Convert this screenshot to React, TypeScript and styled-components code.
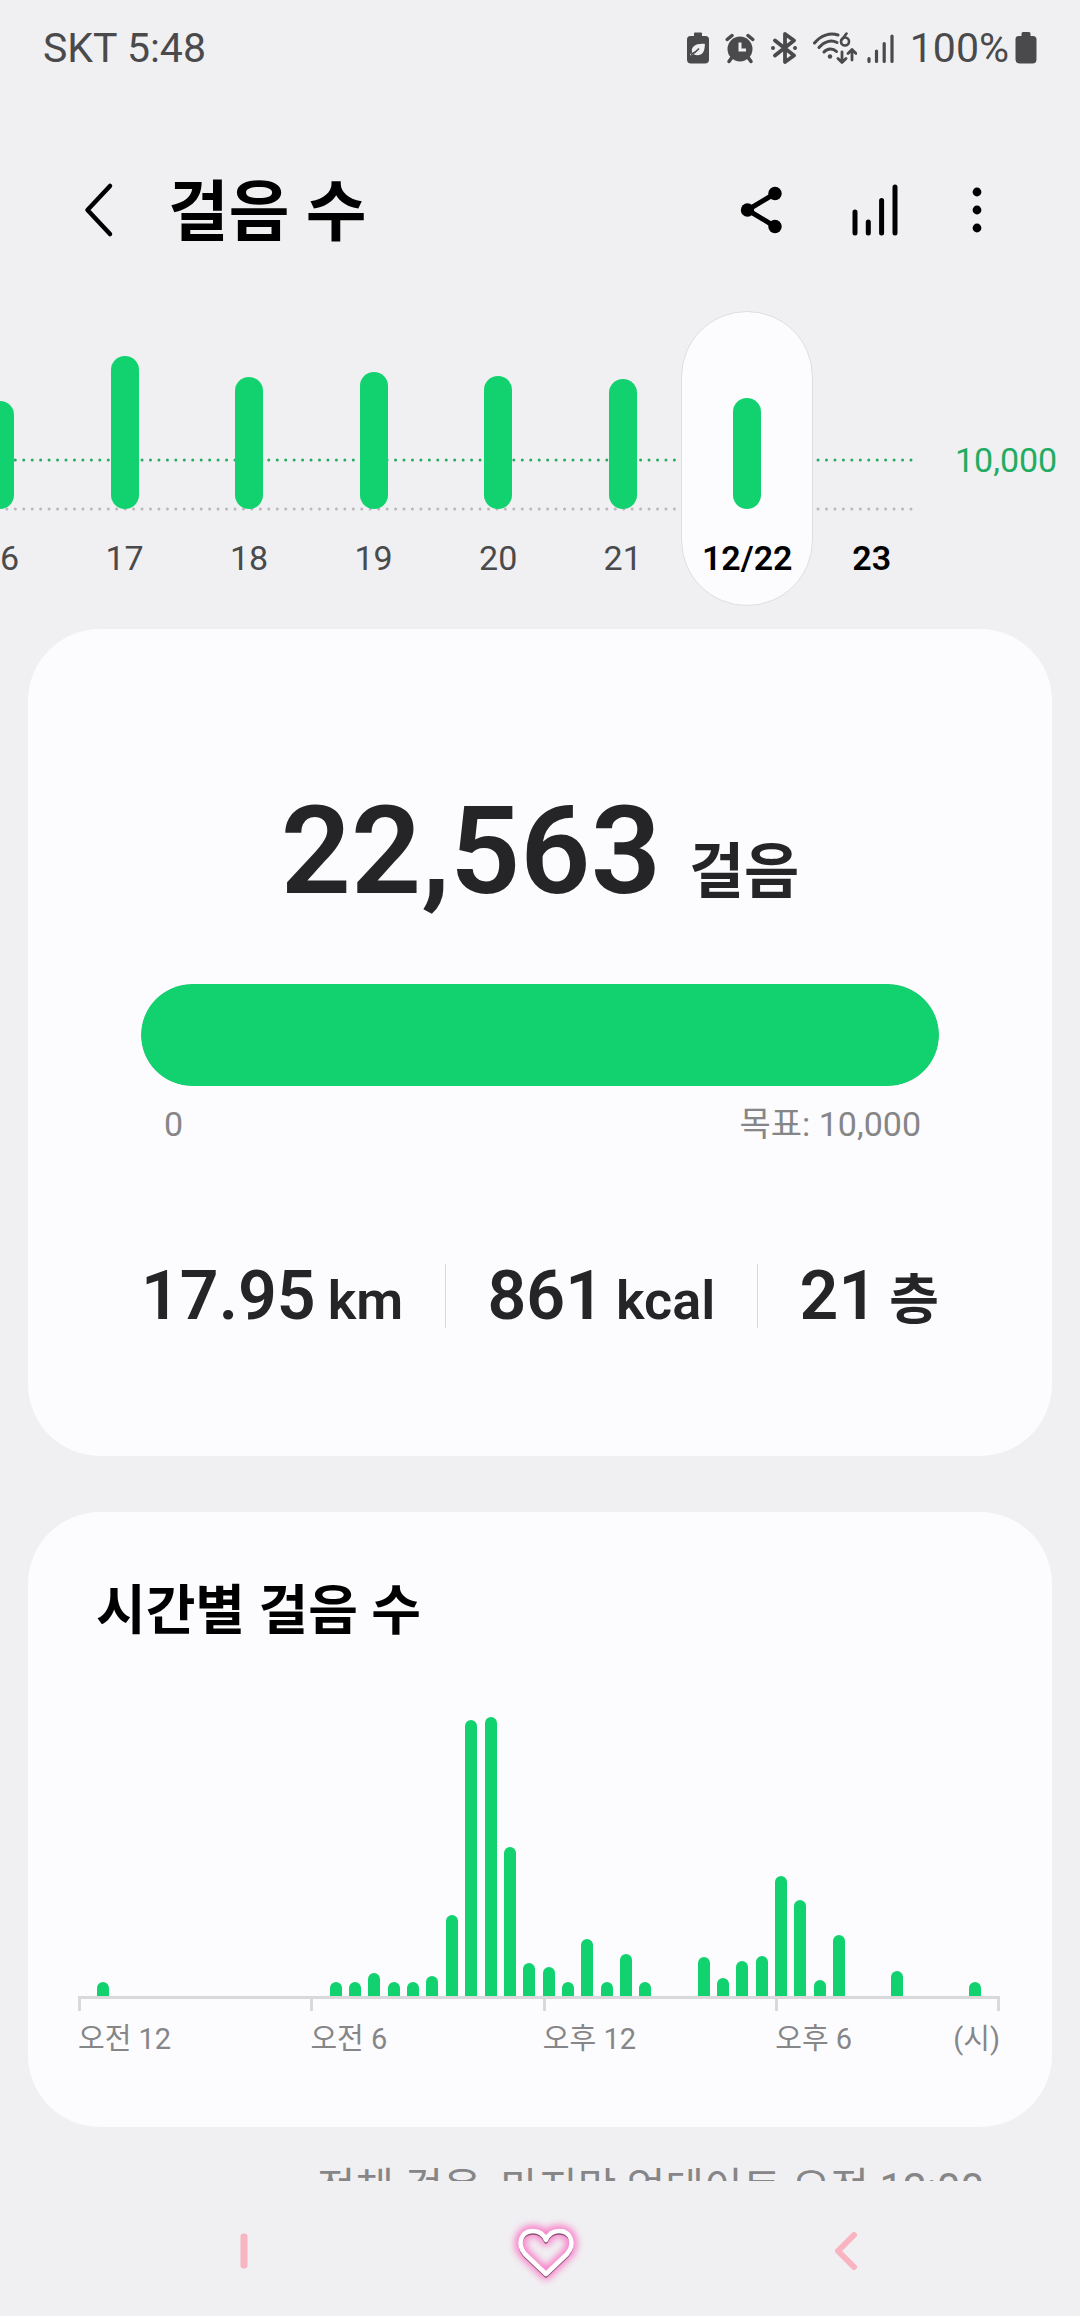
import React from "react";
import styled, { createGlobalStyle } from "styled-components";

const color = {
  page: "#f0f0f2",
  card: "#fcfcfe",
  green: "#12d16f",
  greenText: "#22ac62",
  ink: "#252527",
  muted: "#868688",
  status: "#4a4a4c",
  line: "#d9d9db",
  nav: "#f8b4c0",
};

const GlobalStyle = createGlobalStyle`
  * { box-sizing: border-box; }
  body {
    margin: 0;
    background: ${color.page};
    color: ${color.ink};
    font-family: Roboto, "Noto Sans CJK KR", sans-serif;
  }
  button {
    margin: 0;
    padding: 0;
    border: 0;
    background: none;
    color: inherit;
    font: inherit;
    cursor: pointer;
  }
  svg { display: block; }
  h1, h2, p, ul { margin: 0; padding: 0; }
`;

const Screen = styled.div`
  display: flex;
  flex-direction: column;
  height: 100vh;
`;

/* ---------- status bar ---------- */

const StatusBar = styled.header`
  display: flex;
  flex: none;
  align-items: center;
  justify-content: space-between;
  height: 96px;
  padding: 0 43px;
  color: ${color.status};
  font-size: 41px;
  line-height: 48px;
`;

const StatusGroup = styled.div<{ $gap: number }>`
  display: flex;
  align-items: center;
  gap: ${(p) => p.$gap}px;
`;

const EcoBattery = () => (
  <svg width="22" height="32" viewBox="0 0 22 32" fill={color.status}>
    <path d="M7 1.5Q7 .5 8 .5h6q1 0 1 1V4h3.500Q22 4 22 7.500v20q0 4-4 4H4q-4 0-4-4v-20Q0 4 3.500 4H7z" />
    <path
      d="M18 12c-4-.4-9 0-11.500 2.500-2 2-2 4.500-1.200 6L3 22.200l.8 1.300 2.700-1.500c3 2 7.500 1.500 9.500-1.500 1.800-2.600 1.600-6 2-8.500z"
      fill={color.page}
    />
    <path d="M4 22.500c3.500-1.500 6-3.500 8-6" stroke={color.status} strokeWidth="1.500" fill="none" />
  </svg>
);

const AlarmIcon = () => (
  <svg width="30" height="32" viewBox="0 0 30 32" fill="none" stroke={color.status} strokeLinecap="round">
    <circle cx="15" cy="17" r="12.500" fill={color.status} stroke="none" />
    <path d="M2.200 7.500 7 3.500M27.800 7.500 23 3.500" strokeWidth="3.500" />
    <path d="m6.500 26-2.500 3.500M23.500 26l2.500 3.500" strokeWidth="3.500" />
    <path d="M15 10.500V18h6" stroke={color.page} strokeWidth="3" strokeLinecap="butt" />
  </svg>
);

const BluetoothIcon = () => (
  <svg width="26" height="32" viewBox="0 0 26 32" fill="none" stroke={color.status} strokeLinecap="round" strokeLinejoin="round">
    <path d="m4 8.500 19 15-9 6.500V2l9 6.500-19 15" strokeWidth="3.800" />
    <circle cx="2" cy="16" r="2" fill={color.status} stroke="none" />
    <circle cx="24" cy="16" r="2" fill={color.status} stroke="none" />
  </svg>
);

const WifiIcon = () => (
  <svg width="44" height="32" viewBox="0 0 44 32" fill="none" stroke={color.status} strokeLinecap="round" strokeLinejoin="round">
    <path d="M1.500 11C8 3 17 .5 25 3" strokeWidth="3" />
    <path d="M6 15.500C11 9.500 18 7.500 24 10.500" strokeWidth="3" />
    <path d="M11 20c3.500-4 9-4 12.500-.5" strokeWidth="3" />
    <circle cx="17" cy="24.500" r="2.200" fill={color.status} stroke="none" />
    <circle cx="32" cy="9.500" r="4" strokeWidth="2.600" />
    <path d="m33.500 1.500-4.500 6" strokeWidth="2.600" />
    <path d="M29 20v10m-4-3.500 4 4 4-4M39 28V18m-4 3.500 4-4 4 4" strokeWidth="2.800" />
  </svg>
);

const SignalIcon = () => (
  <svg width="27" height="32" viewBox="0 0 27 32" stroke={color.status} strokeWidth="3.200" strokeLinecap="round">
    <path d="M2 26.500v3M9.500 19v10.500M17.200 11.500v18M25 4v25.500" />
  </svg>
);

const FullBattery = () => (
  <svg width="22" height="32" viewBox="0 0 22 32" fill={color.status}>
    <path d="M6.500 1.500Q6.500 0 8 0h6q1.500 0 1.500 1.500V4H18q3.500 0 3.500 3.500v20q0 4-4 4h-13q-4 0-4-4v-20Q.5 4 4 4h2.500z" />
  </svg>
);

/* ---------- title bar ---------- */

const TitleBar = styled.div`
  display: flex;
  flex: none;
  align-items: center;
  height: 215px;
  padding: 13px 91px 0 75px;
  color: #000;
`;

const Title = styled.h1`
  flex: 1;
  margin-left: 45px;
  padding-top: 6px;
  font-size: 66px;
  line-height: 80px;
  font-weight: 700;
`;

const IconButton = styled.button<{ $narrow?: boolean }>`
  display: grid;
  place-items: center;
  width: ${(p) => (p.$narrow ? 24 : 48)}px;
  height: 64px;
`;

const Actions = styled.div`
  display: flex;
  gap: 66px;
`;

/* ---------- daily strip ---------- */

const Daily = styled.section`
  display: grid;
  grid-template-columns: minmax(0, 1fr) 146px;
  flex: none;
  height: 295px;
  overflow: hidden;
`;

const Strip = styled.div`
  position: relative;
  display: flex;
  justify-content: flex-end;
`;

const Guides = styled.svg`
  position: absolute;
  inset: 0;
  width: 100%;
  height: 100%;
`;

const Day = styled.button<{ $tone: "past" | "selected" | "future" }>`
  position: relative;
  display: flex;
  flex: 0 0 calc(100% / 15 * 2);
  flex-direction: column;
  align-items: center;
  justify-content: flex-end;
  height: 295px;
  padding-bottom: 28px;
  color: ${(p) => (p.$tone === "past" ? color.status : "#000")};
  font-size: 34px;
  line-height: 40px;
  font-weight: ${(p) => (p.$tone === "past" ? 400 : 600)};
  white-space: nowrap;

  &::before {
    content: "";
    display: ${(p) => (p.$tone === "selected" ? "block" : "none")};
    position: absolute;
    inset: 0 -4px;
    border: 1px solid #dedee0;
    border-radius: 66px;
    background: ${color.card};
  }
`;

const DayBar = styled.span`
  position: relative;
  width: 28px;
  margin-bottom: 29px;
  border-radius: 14px;
  background: ${color.green};
`;

const DayLabel = styled.span`
  position: relative;
`;

const GoalMark = styled.div`
  padding: 129px 0 0 21px;
  color: ${color.greenText};
  font-size: 34px;
  line-height: 40px;
`;

/* ---------- cards ---------- */

const Content = styled.main`
  display: flex;
  flex: 1;
  flex-direction: column;
  min-height: 0;
  overflow: hidden;
  padding: 23px 28px 0;
`;

const Card = styled.section`
  flex: none;
  border-radius: 72px;
  background: ${color.card};
`;

const SummaryCard = styled(Card)`
  padding: 150px 113px 128px;
`;

const Total = styled.p`
  display: flex;
  align-items: baseline;
  justify-content: center;
  gap: 28px;
  font-size: 123px;
  line-height: 144px;
  font-weight: 600;
`;

const TotalUnit = styled.span`
  font-size: 60px;
`;

const Progress = styled.div`
  height: 102px;
  margin-top: 39px;
  overflow: hidden;
  border-radius: 51px;
  background: ${color.line};
`;

const ProgressFill = styled.div`
  height: 100%;
  border-radius: 51px;
  background: ${color.green};
`;

const Range = styled.div`
  display: flex;
  justify-content: space-between;
  margin-top: 16px;
  padding: 0 18px 0 23px;
  color: ${color.muted};
  font-size: 34px;
  line-height: 44px;
`;

const Stats = styled.ul`
  display: flex;
  align-items: center;
  justify-content: space-between;
  height: 64px;
  margin-top: 118px;
  list-style: none;
`;

const Stat = styled.li`
  display: flex;
  align-items: baseline;
  gap: 12px;
  padding-top: 4px;
  font-size: 68px;
  line-height: 80px;
  font-weight: 600;
  white-space: nowrap;
`;

const StatUnit = styled.span`
  font-size: 54px;
`;

const Divider = styled.li`
  width: 1px;
  height: 64px;
  background: ${color.line};
`;

const HourlyCard = styled(Card)`
  margin-top: 56px;
  padding: 64px 52px 68px 50px;
`;

const CardTitle = styled.h2`
  padding-left: 18px;
  color: #000;
  font-size: 54px;
  line-height: 72px;
  font-weight: 700;
`;

const Bars = styled.div`
  display: flex;
  align-items: flex-end;
  justify-content: space-between;
  height: 280px;
  margin-top: 68px;
`;

const Bar = styled.span`
  width: 12px;
  border-radius: 6px 6px 0 0;
  background: ${color.green};
`;

const Axis = styled.div`
  display: grid;
  grid-template-columns: 60fr 60fr 60fr 58fr;
  border-top: 3px solid ${color.line};
`;

const AxisCell = styled.div`
  color: ${color.muted};
  font-size: 29px;
  line-height: 40px;

  &::before {
    content: "";
    display: block;
    height: 12px;
    margin-bottom: 8px;
    border-left: 3px solid ${color.line};
  }

  &:last-child::before {
    border-right: 3px solid ${color.line};
  }
`;

const AxisLabels = styled.div`
  display: flex;
  justify-content: space-between;
`;

const Updated = styled.p`
  flex: none;
  margin-top: 32px;
  padding-right: 68px;
  color: ${color.muted};
  font-size: 42px;
  line-height: 60px;
  text-align: right;
  white-space: nowrap;
`;

/* ---------- navigation bar ---------- */

const NavBar = styled.nav`
  display: grid;
  grid-template-columns: repeat(3, 1fr);
  flex: none;
  align-items: center;
  justify-items: center;
  height: 135px;
  padding: 4px 84px 0 94px;
`;

const NavButton = styled.button`
  display: grid;
  place-items: center;
  width: 96px;
  height: 96px;
`;

/* ---------- data ---------- */

const days: { label: string; bar: number; tone: "past" | "selected" | "future" }[] = [
  { label: "16", bar: 108, tone: "past" },
  { label: "17", bar: 153, tone: "past" },
  { label: "18", bar: 132, tone: "past" },
  { label: "19", bar: 137, tone: "past" },
  { label: "20", bar: 133, tone: "past" },
  { label: "21", bar: 130, tone: "past" },
  { label: "12/22", bar: 111, tone: "selected" },
  { label: "23", bar: 0, tone: "future" },
];

/* One value for each half hour of the day. */
const halfHours = [
  0, 14, 0, 0, 0, 0, 0, 0, 0, 0, 0, 0,
  0, 14, 14, 23, 14, 14, 20, 81, 276, 279, 149, 33,
  29, 14, 57, 14, 42, 14, 0, 0, 39, 18, 35, 40,
  120, 96, 16, 61, 0, 0, 25, 0, 0, 0, 14, 0,
];

const stats = [
  { value: "17.95", unit: "km" },
  { value: "861", unit: "kcal" },
  { value: "21", unit: "층" },
];

const heart =
  "M43 65 22 45C14 36 17 22 30 22c7 0 11 4 13 9 2-5 6-9 13-9 13 0 16 14 8 23z";

export default function App() {
  return (
    <>
      <GlobalStyle />
      <Screen>
        <StatusBar>
          <span>SKT 5:48</span>
          <StatusGroup $gap={16}>
            <EcoBattery />
            <AlarmIcon />
            <BluetoothIcon />
            <StatusGroup $gap={10}>
              <WifiIcon />
              <SignalIcon />
            </StatusGroup>
            <StatusGroup $gap={6}>
              <span>100%</span>
              <FullBattery />
            </StatusGroup>
          </StatusGroup>
        </StatusBar>

        <TitleBar>
          <IconButton aria-label="뒤로">
            <svg width="30" height="56" viewBox="0 0 30 56" fill="none" stroke="#000" strokeWidth="4.500" strokeLinecap="round" strokeLinejoin="round">
              <path d="M26 4 3.500 28 26 52" />
            </svg>
          </IconButton>
          <Title>걸음 수</Title>
          <Actions>
            <IconButton aria-label="공유">
              <svg width="42" height="48" viewBox="0 0 42 48">
                <path d="M35 7.500 7.500 24 35 40.500" fill="none" stroke="#000" strokeWidth="5" />
                <circle cx="35" cy="7.500" r="6.700" />
                <circle cx="7.500" cy="24" r="6.700" />
                <circle cx="35" cy="40.500" r="6.700" />
              </svg>
            </IconButton>
            <IconButton aria-label="통계">
              <svg width="48" height="52" viewBox="0 0 48 52" stroke="#000" strokeWidth="5" strokeLinecap="round">
                <path d="M4 28v21M17.300 38v11M30.600 16.500V49M44 3v46" />
              </svg>
            </IconButton>
            <IconButton $narrow aria-label="더보기">
              <svg width="10" height="46" viewBox="0 0 10 46">
                <circle cx="5" cy="5" r="4.400" />
                <circle cx="5" cy="23" r="4.400" />
                <circle cx="5" cy="41" r="4.400" />
              </svg>
            </IconButton>
          </Actions>
        </TitleBar>

        <Daily>
          <Strip>
            <Guides aria-hidden="true">
              <svg x="-23" width="100%" height="100%" overflow="visible">
                <line x1="100%" x2="0" y1="149" y2="149" stroke={color.greenText} strokeWidth="3" strokeLinecap="round" strokeDasharray="0 8.450" />
                <line x1="100%" x2="0" y1="198" y2="198" stroke="#b9b9bb" strokeWidth="3" strokeLinecap="round" strokeDasharray="0 8.450" />
              </svg>
            </Guides>
            {days.map((d) => (
              <Day key={d.label} $tone={d.tone} aria-pressed={d.tone === "selected"}>
                {d.bar > 0 && <DayBar style={{ height: d.bar }} />}
                <DayLabel>{d.label}</DayLabel>
              </Day>
            ))}
          </Strip>
          <GoalMark>10,000</GoalMark>
        </Daily>

        <Content>
          <SummaryCard>
            <Total>
              <span>22,563</span>
              <TotalUnit>걸음</TotalUnit>
            </Total>
            <Progress role="progressbar" aria-valuemin={0} aria-valuemax={10000} aria-valuenow={10000} aria-label="걸음 수">
              <ProgressFill style={{ width: "100%" }} />
            </Progress>
            <Range>
              <span>0</span>
              <span>목표: 10,000</span>
            </Range>
            <Stats>
              {stats.map((s, i) => (
                <React.Fragment key={s.unit}>
                  {i > 0 && <Divider aria-hidden="true" />}
                  <Stat>
                    <span>{s.value}</span>
                    <StatUnit>{s.unit}</StatUnit>
                  </Stat>
                </React.Fragment>
              ))}
            </Stats>
          </SummaryCard>

          <HourlyCard>
            <CardTitle>시간별 걸음 수</CardTitle>
            <Bars>
              {halfHours.map((h, i) => (
                <Bar key={i} style={{ height: h }} />
              ))}
            </Bars>
            <Axis>
              <AxisCell>오전 12</AxisCell>
              <AxisCell>오전 6</AxisCell>
              <AxisCell>오후 12</AxisCell>
              <AxisCell>
                <AxisLabels>
                  <span>오후 6</span>
                  <span>(시)</span>
                </AxisLabels>
              </AxisCell>
            </Axis>
          </HourlyCard>

          <Updated>전체 걸음, 마지막 업데이트 오전 12:00</Updated>
        </Content>

        <NavBar>
          <NavButton aria-label="최근 앱">
            <svg width="8" height="36" viewBox="0 0 8 36">
              <rect width="7" height="35" x=".5" y=".5" rx="3" fill={color.nav} />
            </svg>
          </NavButton>
          <NavButton aria-label="홈">
            <svg width="84" height="84" viewBox="0 0 84 84" fill="none" strokeLinejoin="round">
              <defs>
                <filter id="glow" x="-30%" y="-30%" width="160%" height="160%">
                  <feGaussianBlur stdDeviation="3.500" />
                </filter>
              </defs>
              <path d={heart} stroke="#f884cb" strokeWidth="12" filter="url(#glow)" />
              <path d={heart} stroke="#8a5577" strokeWidth="3.500" transform="translate(0 2)" />
              <path d={heart} stroke="#fff" strokeWidth="4.500" />
            </svg>
          </NavButton>
          <NavButton aria-label="이전">
            <svg width="24" height="40" viewBox="0 0 24 40" fill="none" stroke={color.nav} strokeWidth="6" strokeLinecap="round" strokeLinejoin="round">
              <path d="M20 4 4 20l16 16" />
            </svg>
          </NavButton>
        </NavBar>
      </Screen>
    </>
  );
}
